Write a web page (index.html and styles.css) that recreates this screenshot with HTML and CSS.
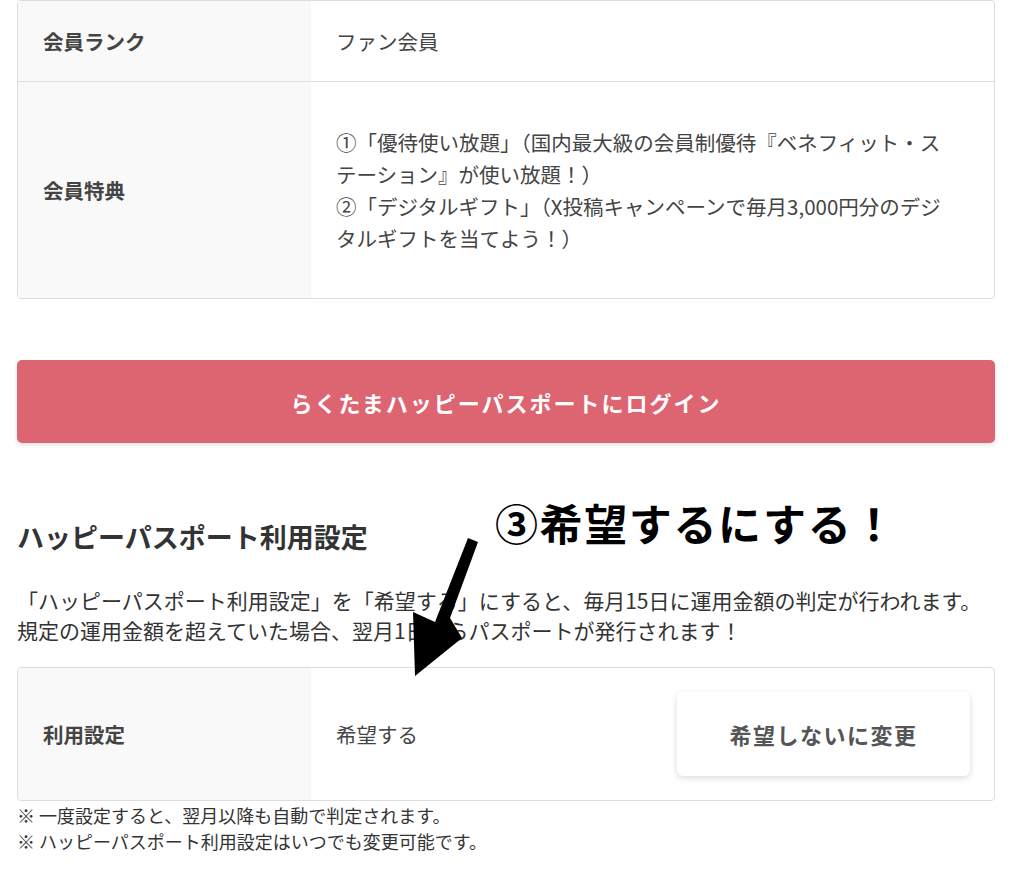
FILE: index.html
```html
<!DOCTYPE html>
<html lang="ja">
<head>
<meta charset="UTF-8">
<meta name="viewport" content="width=device-width, initial-scale=1.0">
<title>ハッピーパスポート</title>
<link rel="stylesheet" href="styles.css">
</head>
<body>
<div class="page">
    <div class="info-card">
        <div class="info-row">
            <div class="info-label">会員ランク</div>
            <div class="info-value">ファン会員</div>
        </div>
        <div class="info-row">
            <div class="info-label">会員特典</div>
            <div class="info-value tall">
                ①「優待使い放題」（国内最大級の会員制優待『ベネフィット・ス<br>テーション』が使い放題！）<br>
                ②「デジタルギフト」（X投稿キャンペーンで毎月3,000円分のデジ<br>タルギフトを当てよう！）
            </div>
        </div>
    </div>

    <button class="login-btn">らくたまハッピーパスポートにログイン</button>

    <div class="setting-section">
        <h2>ハッピーパスポート利用設定</h2>
        <p class="lead">「ハッピーパスポート利用設定」を「希望する」にすると、毎月15日に運用金額の判定が行われます。<br>規定の運用金額を超えていた場合、翌月1日からパスポートが発行されます！</p>

        <div class="info-card">
            <div class="info-row">
                <div class="info-label">利用設定</div>
                <div class="info-value setting-value">
                    <span>希望する</span>
                    <button class="change-btn">希望しないに変更</button>
                </div>
            </div>
        </div>

        <p class="note">※ 一度設定すると、翌月以降も自動で判定されます。<br>※ ハッピーパスポート利用設定はいつでも変更可能です。</p>

        <div class="callout">③希望するにする！</div>
        <svg class="callout-arrow" width="80" height="150" viewBox="0 0 80 150">
            <polygon points="58,0 68,4 40,80 52,100 5,138 3,74 25,84" fill="#000"/>
        </svg>
    </div>
</div>
</body>
</html>
```

FILE: styles.css
```css
body {
    margin: 0;
    font-family: "Noto Sans CJK JP", "Noto Sans", sans-serif;
    color: #333;
    background: #fff;
}
.page {
    width: 978px;
    margin-left: 17px;
}
.info-card {
    border: 1px solid #ddd;
    border-radius: 4px;
    overflow: hidden;
}
.info-row {
    display: flex;
    border-top: 1px solid #ddd;
}
.info-row:first-child {
    border-top: none;
}
.info-label {
    width: 268px;
    flex-shrink: 0;
    display: flex;
    align-items: center;
    padding: 0 0 0 25px;
    background-color: #f9f9f9;
    font-size: 20.5px;
    font-weight: bold;
    color: #444;
}
.info-value {
    flex: 1;
    padding: 24px 25px;
    font-size: 20.5px;
    line-height: 32px;
    color: #444;
}
.info-value.tall {
    padding: 44px 25px;
}
.login-btn {
    display: block;
    width: 100%;
    height: 83px;
    margin-top: 61px;
    border: none;
    border-radius: 5px;
    background-color: #dd6571;
    color: #fff;
    font-family: inherit;
    font-size: 22px;
    font-weight: bold;
    letter-spacing: 2px;
    box-shadow: 0 2px 4px rgba(0, 0, 0, 0.12);
}
.setting-section {
    position: relative;
}
h2 {
    margin: 76px 0 0;
    font-size: 27px;
    line-height: 36px;
    color: #333;
}
.lead {
    margin: 30px 0 22px;
    font-size: 21px;
    line-height: 30px;
}
.setting-value {
    display: flex;
    align-items: center;
    justify-content: space-between;
    padding: 24px 24px 24px 25px;
}
.change-btn {
    width: 293px;
    height: 84px;
    border: none;
    border-radius: 6px;
    background: #fff;
    box-shadow: 0 2px 6px rgba(0, 0, 0, 0.15);
    font-family: inherit;
    font-size: 22px;
    font-weight: bold;
    letter-spacing: 1.5px;
    color: #555;
}
.note {
    margin: 1px 0 0;
    font-size: 18px;
    line-height: 26px;
}
.callout {
    position: absolute;
    left: 478px;
    top: -28px;
    font-size: 43px;
    font-weight: bold;
    color: #000;
    letter-spacing: 1.6px;
}
.callout-arrow {
    position: absolute;
    left: 393px;
    top: 19px;
}
```
